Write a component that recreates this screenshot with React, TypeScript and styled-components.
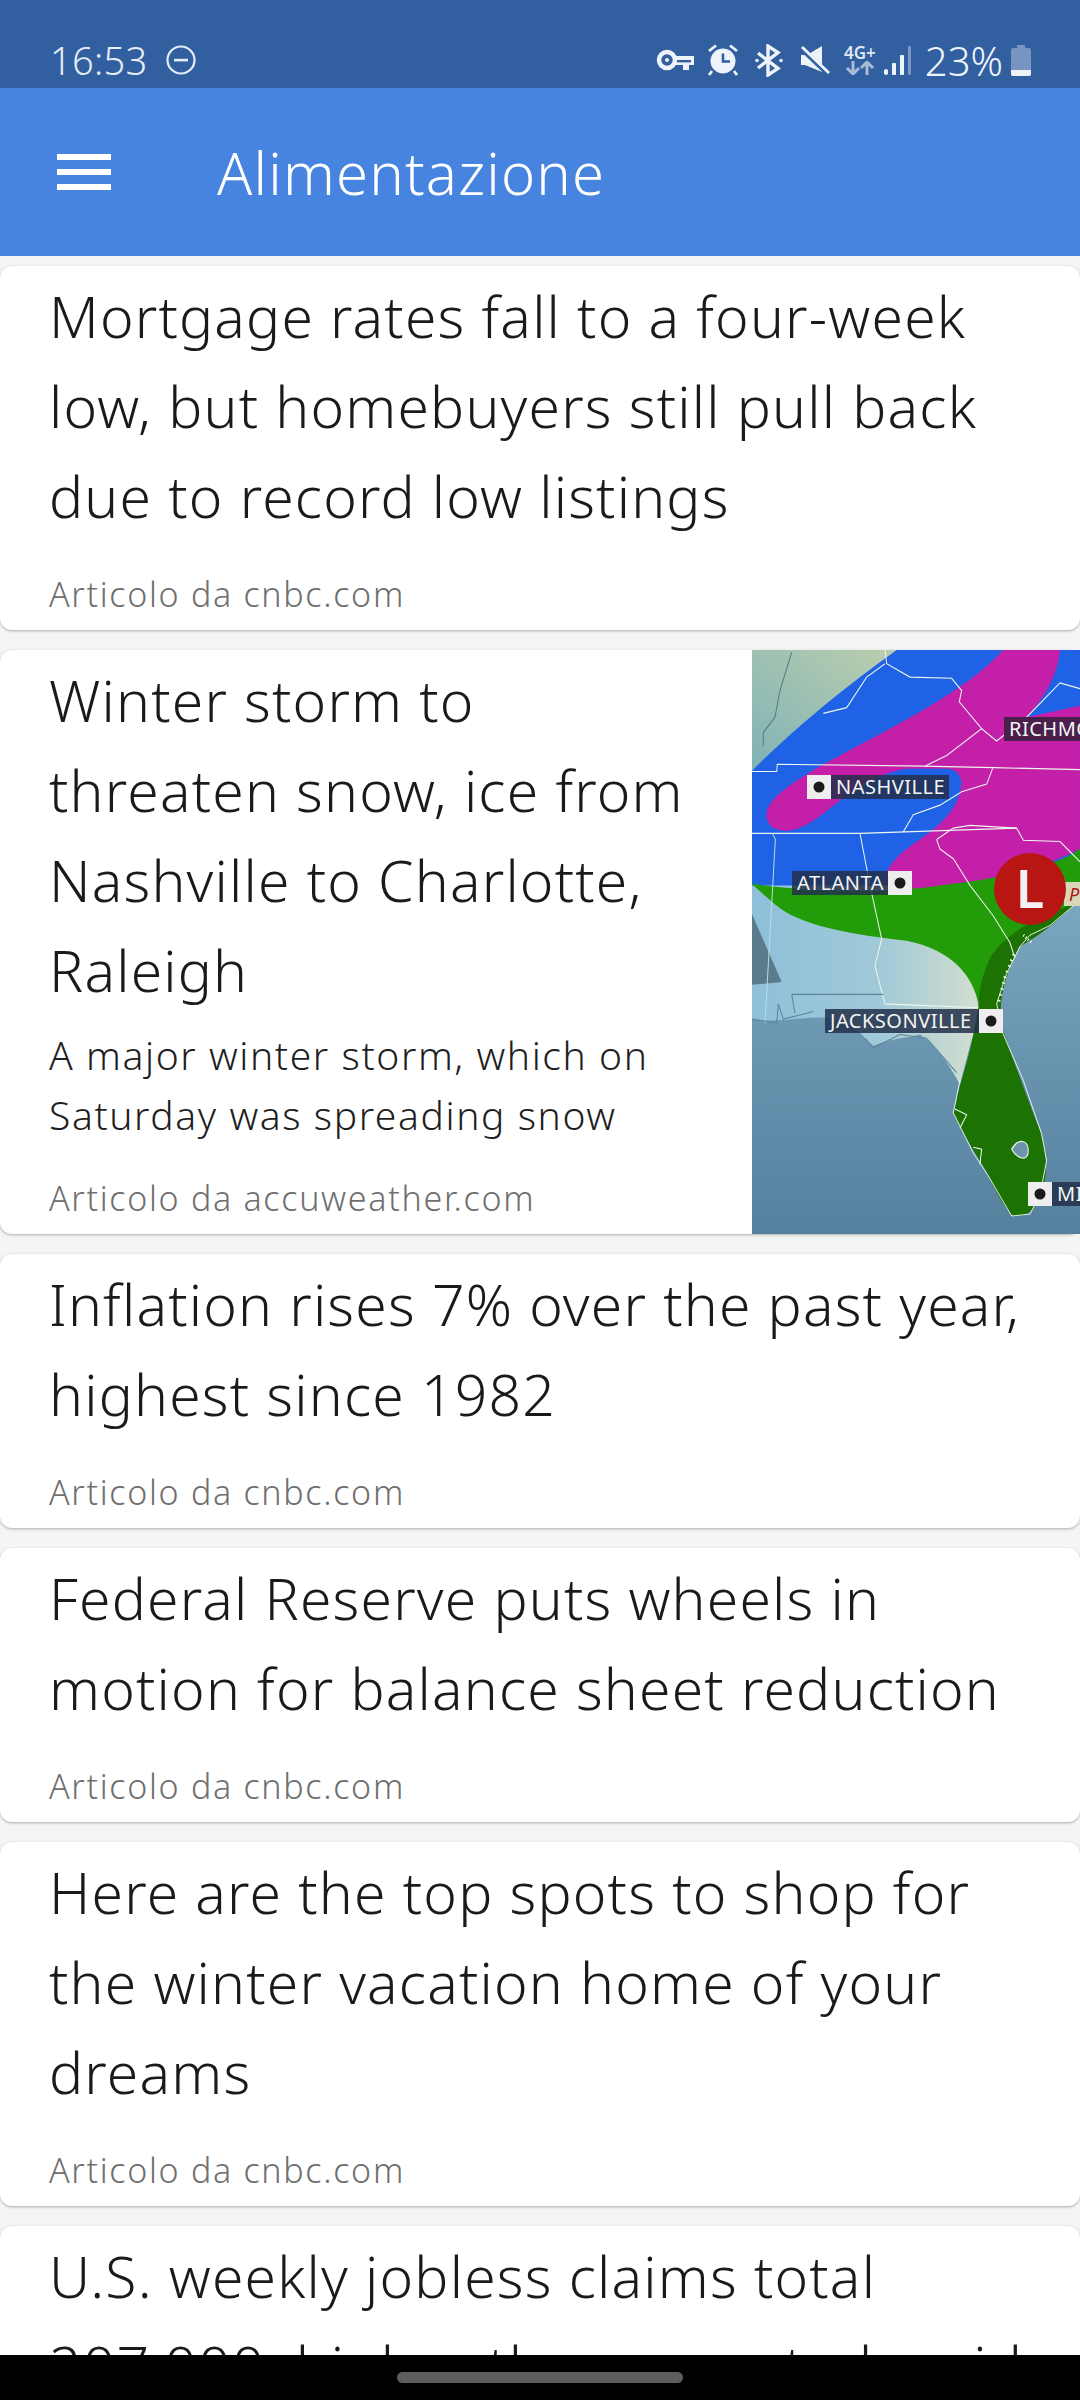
import React from "react";
import styled, { createGlobalStyle } from "styled-components";

const FONT = `"Noto Sans", "Open Sans", sans-serif`;

const GlobalStyle = createGlobalStyle`
  html, body {
    margin: 0;
    padding: 0;
    background: #000;
    font-family: ${FONT};
  }
`;

type Article = {
  title: string;
  description?: string;
  source: string;
  hasMap?: boolean;
};

const ARTICLES: Article[] = [
  {
    title: "Mortgage rates fall to a four-week low, but homebuyers still pull back due to record low listings",
    source: "Articolo da cnbc.com",
  },
  {
    title: "Winter storm to threaten snow, ice from Nashville to Charlotte, Raleigh",
    description: "A major winter storm, which on Saturday was spreading snow",
    source: "Articolo da accuweather.com",
    hasMap: true,
  },
  {
    title: "Inflation rises 7% over the past year, highest since 1982",
    source: "Articolo da cnbc.com",
  },
  {
    title: "Federal Reserve puts wheels in motion for balance sheet reduction",
    source: "Articolo da cnbc.com",
  },
  {
    title: "Here are the top spots to shop for the winter vacation home of your dreams",
    source: "Articolo da cnbc.com",
  },
  {
    title: "U.S. weekly jobless claims total 207,000, higher than expected amid omicron",
    source: "Articolo da cnbc.com",
  },
];

const StatusIcons = () => (
  <StatusRight>
    <Glyph $after={13} width="38" height="22" viewBox="0 0 38 22" fill="none">
      <circle cx="11" cy="11" r="8" stroke="#eef3fa" strokeWidth="4.5" />
      <circle cx="11" cy="11" r="2" fill="#eef3fa" />
      <path d="M19 7H38V16H33V21H27V16H19Z" fill="#eef3fa" />
      <rect x="21" y="11" width="14" height="2.4" fill="#315f9f" />
    </Glyph>
    <Glyph $after={16} width="32" height="32" viewBox="0 0 32 32" fill="none">
      <circle cx="16" cy="17" r="12.5" fill="#eef3fa" />
      <path d="M16 9.5V17.5H23" stroke="#315f9f" strokeWidth="2.6" />
      <path d="M2 7L9 1.5M30 7L23 1.5M5 27L2 31M27 27L30 31" stroke="#eef3fa" strokeWidth="2.8" />
    </Glyph>
    <Glyph $after={18} width="28" height="33" viewBox="0 0 28 33" fill="none">
      <path d="M3 9L23 24.5L13 31V2L23 8.5L3 24" stroke="#eef3fa" strokeWidth="3.4" />
      <circle cx="2" cy="16.5" r="1.8" fill="#eef3fa" />
      <circle cx="26" cy="16.5" r="1.8" fill="#eef3fa" />
    </Glyph>
    <Glyph $after={14} width="29" height="29" viewBox="0 0 29 29" fill="none">
      <path d="M0 9H6L21 0V26L4 19H0Z" fill="#eef3fa" />
      <path d="M1 3L28 29" stroke="#315f9f" strokeWidth="5" />
      <path d="M1 1L28 27" stroke="#eef3fa" strokeWidth="2.8" />
    </Glyph>
    <NetworkIcon>
      <NetworkLabel>4G+</NetworkLabel>
      <svg width="30" height="14" viewBox="0 0 30 14" fill="none">
        <path d="M8 0V12M2 7L8 13L14 7" stroke="#a9bcd6" strokeWidth="3" />
        <path d="M22 14V2M16 7L22 1L28 7" stroke="#a9bcd6" strokeWidth="3" />
      </svg>
    </NetworkIcon>
    <Glyph $after={14} width="27" height="29" viewBox="0 0 27 29">
      <rect x="0" y="23" width="4" height="6" rx="2" fill="#eef3fa" />
      <rect x="8" y="17" width="4" height="12" rx="1" fill="#eef3fa" />
      <rect x="16" y="9" width="4" height="20" rx="1" fill="#eef3fa" />
      <rect x="24" y="0" width="3" height="29" rx="1" fill="#7d99c2" />
    </Glyph>
    <BatteryText>23%</BatteryText>
    <Glyph $after={0} width="20" height="31" viewBox="0 0 20 31">
      <path d="M6 0H14V3H18Q20 3 20 5V29Q20 31 18 31H2Q0 31 0 29V5Q0 3 2 3H6Z" fill="#7795c0" />
      <path d="M0 25H20V29Q20 31 18 31H2Q0 31 0 29Z" fill="#eef3fa" />
    </Glyph>
  </StatusRight>
);

const CityLabel = ({ x, y, width, text, dotLeft }: { x: number; y: number; width: number; text: string; dotLeft: boolean }) => {
  const boxX = dotLeft ? x : x + width;
  const labelX = dotLeft ? x + 24 : x;
  return (
    <g>
      <rect x={labelX} y={y} width={width} height={24} fill="#22304a" fillOpacity={0.85} />
      <rect x={boxX} y={y} width={24} height={24} fill="#eeeeee" />
      <circle cx={boxX + 12} cy={y + 12} r={5.5} fill="#1a1a1a" />
      <text x={labelX + 5} y={y + 18.5} fontFamily={FONT} fontSize={20} letterSpacing={0.5} fill="#f4f4f4">
        {text}
      </text>
    </g>
  );
};

const StormMap = () => (
  <svg width="328" height="584" viewBox="0 0 328 584">
    <defs>
      <linearGradient id="ocean" x1="0" y1="0" x2="0" y2="1">
        <stop offset="0.3" stopColor="#84afc8" />
        <stop offset="1" stopColor="#55809e" />
      </linearGradient>
      <linearGradient id="northLand" x1="0" y1="1" x2="1" y2="0">
        <stop offset="0" stopColor="#7fb2b6" />
        <stop offset="1" stopColor="#bccfae" />
      </linearGradient>
      <linearGradient id="southLand" x1="0" y1="0" x2="1" y2="0">
        <stop offset="0" stopColor="#8fc0da" />
        <stop offset="0.55" stopColor="#a0c9d8" />
        <stop offset="1" stopColor="#d3dfcf" />
      </linearGradient>
    </defs>
    <rect width="328" height="584" fill="url(#ocean)" />
    <g transform="translate(-12 -9.2) scale(0.3333 0.3822)">
      <path d="M36 24H480L36 340Z" fill="url(#northLand)" />
      <path d="M36 620H700L725 960L690 1060L660 1160C620 1100 590 1060 540 1030C500 1040 450 1040 400 1060C370 1040 340 990 260 985C180 985 100 1000 36 990Z" fill="url(#southLand)" />
      <path d="M36 715L125 893L36 900Z" fill="#5c7b8b" />
      <path d="M36 340C150 240 300 130 470 24H1020V640H36Z" fill="#1f62e6" />
      <path d="M80 450C85 410 170 360 300 300C480 215 680 130 790 24H960C955 90 905 160 860 200L1020 170V545C900 600 700 640 520 650L440 640C425 600 470 560 540 520C620 470 660 430 665 370C660 345 640 335 620 335H500C420 345 340 390 290 425C230 465 190 495 140 497C100 497 75 480 80 450Z" fill="#c41fa8" />
      <path d="M36 635C200 660 450 660 600 640C800 620 950 590 1020 545V680C950 720 800 770 760 830C730 880 720 920 715 950C700 880 640 810 500 785C350 770 200 750 120 700C80 670 50 650 36 635Z" fill="#229c08" />
      <path d="M1005 688C900 720 800 760 750 830C725 880 715 920 715 960L700 1030C690 1080 670 1130 655 1180L640 1235C660 1280 700 1330 740 1390C770 1450 800 1490 820 1505C860 1510 890 1490 910 1430C925 1380 920 1320 890 1260C860 1190 820 1100 790 1020C770 960 790 880 840 800C900 770 960 730 1005 688Z" fill="#1d7204" />
      <path d="M815 1330C835 1300 865 1305 865 1335C865 1365 830 1355 815 1330Z" fill="#6c95ad" stroke="#eef6ee" strokeWidth="3" />
      <g fill="none" stroke="#eef6ee" strokeWidth="3">
        <path d="M36 342H110L112 323L550 328L760 332L1020 337" />
        <path d="M36 504H360L830 490L850 522L960 525L1020 578" />
        <path d="M98 504L106 520L75 1000" stroke="#b9dbe3" />
        <path d="M360 504L390 640L425 780L405 850L435 950L715 960" />
        <path d="M435 24L440 60L510 95L635 98L665 130L658 160L725 230L620 300L555 328" />
        <path d="M725 230L770 262L860 200L960 110L1020 125" />
        <path d="M758 334L740 375L665 395L600 430L520 455L490 500" />
        <path d="M435 60L380 95L320 175L250 190" />
        <path d="M590 520L640 490L690 483L830 490M590 520L600 545L640 570L690 640L760 720L810 790L825 830" />
        <path d="M1005 690L930 745L870 770L840 800L800 870L770 950L790 1030L850 1150L905 1290L920 1360L900 1450L870 1500L815 1505L745 1400L700 1340L640 1235L660 1150" strokeWidth="2.6" />
        <path d="M822 820L795 880L775 950" strokeWidth="9" strokeDasharray="4 12" />
        <path d="M850 770L875 790" strokeWidth="8" strokeDasharray="3 6" />
        <path d="M645 1225L680 1240L660 1275M700 1325L725 1330L720 1370" />
        <path d="M36 990L110 1000L115 950L130 990L220 970" stroke="#5d8497" />
        <path d="M155 925H430M155 925L165 975" stroke="#5d8497" />
        <path d="M375 1040L400 1065L480 1030L560 1040L650 1130" stroke="#5d8497" />
        <path d="M155 30L120 130L105 200L70 240L70 275" stroke="#557c80" />
      </g>
    </g>
    <CityLabel x={55} y={125} width={118} text="NASHVILLE" dotLeft />
    <CityLabel x={40} y={221} width={96} text="ATLANTA" dotLeft={false} />
    <CityLabel x={73} y={359} width={154} text="JACKSONVILLE" dotLeft={false} />
    <CityLabel x={276} y={532} width={60} text="MIAMI" dotLeft />
    <rect x="252" y="67" width="90" height="24" fill="#4a1f4c" />
    <text x="257" y="85.5" fontFamily={FONT} fontSize={20} letterSpacing={0.5} fill="#f4f4f4">RICHMOND</text>
    <rect x="312" y="232" width="20" height="24" fill="#d8d8b8" />
    <text x="317" y="251" fontFamily={FONT} fontStyle="italic" fontSize={18} fill="#b01612">P</text>
    <circle cx="278" cy="239" r="36" fill="#b71612" />
    <text x="278" y="258" textAnchor="middle" fontFamily={FONT} fontSize={52} fontWeight={600} fill="#f2f2f2">L</text>
  </svg>
);

const App: React.FC = () => (
  <>
    <GlobalStyle />
    <Screen>
      <StatusBar>
        <StatusLeft>
          <Clock>16:53</Clock>
          <svg width="30" height="30" viewBox="0 0 30 30" fill="none">
            <circle cx="15" cy="15" r="13.5" stroke="#e6edf7" strokeWidth="2.2" />
            <rect x="8" y="13.8" width="14" height="2.6" fill="#e6edf7" />
          </svg>
        </StatusLeft>
        <StatusIcons />
      </StatusBar>
      <AppBar>
        <svg width="54" height="36" viewBox="0 0 54 36">
          <rect y="0" width="54" height="6" fill="#fff" />
          <rect y="15" width="54" height="6" fill="#fff" />
          <rect y="30" width="54" height="6" fill="#fff" />
        </svg>
        <AppTitle>Alimentazione</AppTitle>
      </AppBar>
      <List>
        {ARTICLES.map((article) => (
          <Card key={article.title}>
            <CardText>
              <Title>{article.title}</Title>
              {article.description && <Description>{article.description}</Description>}
              <Source>{article.source}</Source>
            </CardText>
            {article.hasMap && (
              <Thumb>
                <StormMap />
              </Thumb>
            )}
          </Card>
        ))}
      </List>
      <NavBar>
        <HomeHandle />
      </NavBar>
    </Screen>
  </>
);

export default App;

const Screen = styled.div`
  width: 1080px;
  height: 2400px;
  display: flex;
  flex-direction: column;
  overflow: hidden;
  background: #f5f5f5;
`;

const StatusBar = styled.div`
  height: 88px;
  flex: none;
  box-sizing: border-box;
  padding: 32px 49px 0 50px;
  background: #315f9f;
  display: flex;
  justify-content: space-between;
  align-items: center;
  color: #e6edf7;
`;

const StatusLeft = styled.div`
  display: flex;
  align-items: center;
  gap: 18px;
`;

const Clock = styled.span`
  font-size: 38px;
  letter-spacing: 0.3px;
  font-weight: 300;
`;

const StatusRight = styled.div`
  display: flex;
  align-items: center;
`;

const Glyph = styled.svg<{ $after: number }>`
  flex: none;
  margin-right: ${({ $after }) => $after}px;
`;

const NetworkIcon = styled.div`
  width: 32px;
  margin-right: 8px;
  display: flex;
  flex-direction: column;
  align-items: center;
  gap: 1px;
`;

const NetworkLabel = styled.span`
  font-size: 17px;
  line-height: 15px;
  font-weight: 600;
  color: #dfe7f2;
`;

const BatteryText = styled.span`
  font-size: 40px;
  font-weight: 300;
  color: #eef3fa;
  margin-right: 8px;
`;

const AppBar = styled.div`
  height: 168px;
  flex: none;
  box-sizing: border-box;
  padding-left: 57px;
  background: #4684e0;
  display: flex;
  align-items: center;
  gap: 106px;
`;

const AppTitle = styled.h1`
  margin: 0;
  color: #fff;
  font-size: 58px;
  letter-spacing: 1.2px;
  font-weight: 300;
`;

const List = styled.div`
  flex: 1;
  min-height: 0;
  overflow: hidden;
  padding-top: 10px;
  display: flex;
  flex-direction: column;
  gap: 20px;
`;

const Card = styled.article`
  flex: none;
  display: flex;
  background: #fff;
  border-radius: 12px;
  box-shadow: 0 1px 3px rgba(0, 0, 0, 0.3);
`;

const CardText = styled.div`
  flex: 1;
  min-width: 0;
  box-sizing: border-box;
  padding: 5px 49px 11px;
`;

const Title = styled.h2`
  margin: 0;
  color: #1a1a1a;
  font-size: 57px;
  line-height: 90px;
  letter-spacing: 1.2px;
  font-weight: 300;
`;

const Description = styled.p`
  margin: 10px 0 0;
  color: #1f1f1f;
  font-size: 39px;
  line-height: 60px;
  letter-spacing: 1.6px;
  font-weight: 300;
`;

const Source = styled.div`
  margin-top: 28px;
  color: #6f6f6f;
  font-size: 34px;
  line-height: 50px;
  letter-spacing: 1.7px;
  font-weight: 300;
`;

const Thumb = styled.div`
  flex: none;
  width: 328px;
  overflow: hidden;
  line-height: 0;
`;

const NavBar = styled.div`
  height: 45px;
  flex: none;
  box-sizing: border-box;
  background: #000;
  display: flex;
  justify-content: center;
  padding-top: 17px;
`;

const HomeHandle = styled.div`
  width: 286px;
  height: 11px;
  border-radius: 6px;
  background: #5e5e5e;
`;
